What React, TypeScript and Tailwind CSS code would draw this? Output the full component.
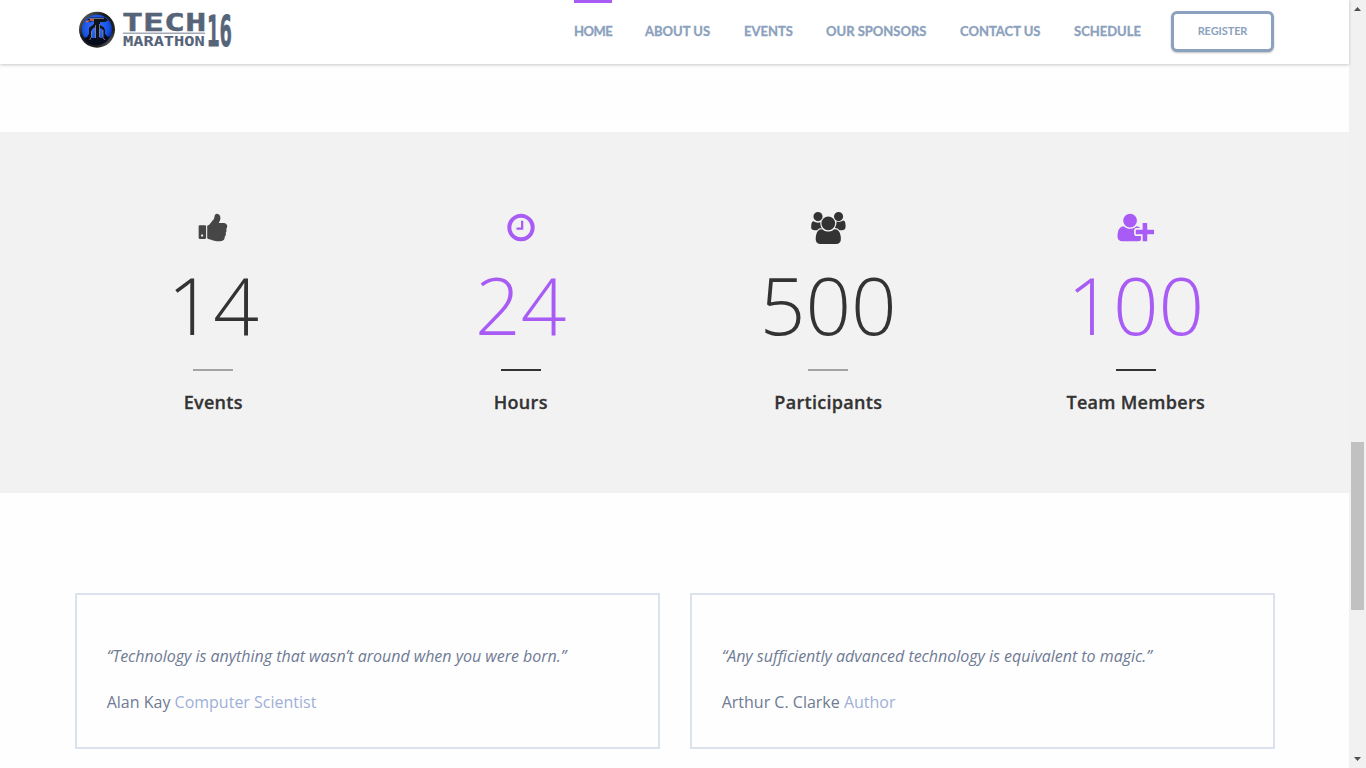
import React from "react";

const THUMBS_UP =
  "M320 1344q0-26-19-45t-45-19q-27 0-45.5 19t-18.5 45q0 27 18.5 45.5t45.5 18.5q26 0 45-18.5t19-45.5zm160-512v640q0 26-19 45t-45 19h-288q-26 0-45-19t-19-45v-640q0-26 19-45t45-19h288q26 0 45 19t19 45zm1184 0q0 86-55 149 15 44 15 76 3 76-43 137 17 56 0 117-15 57-54 94 9 112-49 181-64 76-197 78h-129q-66 0-144-15.5t-121.5-29-120.5-39.5q-123-43-158-44-26-1-45-19.5t-19-44.5v-641q0-25 18-43.5t43-20.5q24-2 76-59t101-121q68-87 101-120 18-18 31-48t17.5-48.5 13.5-60.5q7-39 12.5-61t19.5-52 34-50q19-19 45-19 46 0 82.5 10.5t60 26 40 40.5 24 45 12 50 5 45 .5 39q0 38-9.5 76t-19 60-27.5 56q-3 6-10 18t-11 22-8 24h277q78 0 135 57t57 135z";
const CLOCK =
  "M1024 544v448q0 14-9 23t-23 9h-320q-14 0-23-9t-9-23v-64q0-14 9-23t23-9h224v-352q0-14 9-23t23-9h64q14 0 23 9t9 23zm416 352q0-148-73-273t-198-198-273-73-273 73-198 198-73 273 73 273 198 198 273 73 273-73 198-198 73-273zm224 0q0 209-103 385.5t-279.5 279.5-385.5 103-385.5-103-279.5-279.5-103-385.5 103-385.5 279.5-279.5 385.5-103 385.5 103 279.5 279.5 103 385.5z";
const USERS =
  "M657 896q-162 5-265 128h-134q-82 0-138-40.5t-56-118.5q0-353 124-353 6 0 43.5 21t97.5 42.5 119 21.5q67 0 133-23-5 37-5 66 0 159 93 293zm1071 637q0 120-73 189.5t-194 69.5h-874q-121 0-194-69.5t-73-189.5q0-53 3.5-103.5t14-109 26.5-108.5 43-97.5 62-81 85.5-53.5 111.5-20q10 0 43 21.5t73 48 107 48 135 21.5 135-21.5 107-48 73-48 43-21.5q61 0 111.5 20t85.5 53.5 62 81 43 97.5 26.5 108.5 14 109 3.5 103.5zm-1024-1277q0 106-75 181t-181 75-181-75-75-181 75-181 181-75 181 75 75 181zm704 384q0 159-112.5 271.5t-271.5 112.5-271.5-112.5-112.5-271.5 112.5-271.5 271.5-112.5 271.5 112.5 112.5 271.5zm576 225q0 78-56 118.5t-138 40.5h-134q-103-123-265-128 93-134 93-293 0-29-5-66 66 23 133 23 59 0 119-21.5t97.5-42.5 43.5-21q124 0 124 353zm-128-609q0 106-75 181t-181 75-181-75-75-181 75-181 181-75 181 75 75 181z";
const USER_PLUS =
  "M704 896q-159 0-271.5-112.5t-112.5-271.5 112.5-271.5 271.5-112.5 271.5 112.5 112.5 271.5-112.5 271.5-271.5 112.5zm960 128h352q13 0 22.5 9.5t9.5 22.5v192q0 13-9.5 22.5t-22.5 9.5h-352v352q0 13-9.5 22.5t-22.5 9.5h-192q-13 0-22.5-9.5t-9.5-22.5v-352h-352q-13 0-22.5-9.5t-9.5-22.5v-192q0-13 9.5-22.5t22.5-9.5h352v-352q0-13 9.5-22.5t22.5-9.5h192q13 0 22.5 9.5t9.5 22.5v352zm-736 224q0 52 38 90t90 38h256v238q-68 50-171 50h-874q-121 0-194-69t-73-190q0-53 3.5-103.5t14-109 26.5-108.5 43-97.5 62-81 85.5-53.5 111.5-20q19 0 39 17 79 61 154.5 91.5t164.5 30.5 164.5-30.5 154.5-91.5q20-17 39-17 132 0 217 96h-223q-52 0-90 38t-38 90v192z";

const nav = [
  { label: "HOME", cls: "w-[38px] tracking-[-0.5px]", active: true },
  { label: "ABOUT US", cls: "w-[66px] tracking-[0px]" },
  { label: "EVENTS", cls: "w-[49px] tracking-[0px]" },
  { label: "OUR SPONSORS", cls: "w-[101px] tracking-[0px]" },
  { label: "CONTACT US", cls: "w-[81px] tracking-[0px]" },
  { label: "SCHEDULE", cls: "w-[68px] tracking-[0px]" },
];

const stats = [
  { value: "14", label: "Events", path: THUMBS_UP, box: "-28 28 1792 1792", icon: "w-8 text-[#464646]", num: "text-[#333]", bar: "bg-[#a3a3a3]" },
  { value: "24", label: "Hours", path: CLOCK, box: "0 28 1792 1792", icon: "w-8 text-[#a85cf5]", num: "text-[#a85cf5]", bar: "bg-[#333]" },
  { value: "500", label: "Participants", path: USERS, box: "0 0 2048 1792", icon: "w-[36.57px] text-[#333]", num: "text-[#333]", bar: "bg-[#a3a3a3]" },
  { value: "100", label: "Team Members", path: USER_PLUS, box: "-28 28 2048 1792", icon: "w-[36.57px] overflow-visible text-[#a85cf5]", num: "text-[#a85cf5]", bar: "bg-[#333]" },
];

const quotes = [
  { text: "“Technology is anything that wasn’t around when you were born.”", name: "Alan Kay", role: "Computer Scientist" },
  { text: "“Any sufficiently advanced technology is equivalent to magic.”", name: "Arthur C. Clarke", role: "Author" },
];

function Logo() {
  return (
    <svg width="166" height="56" viewBox="0 0 166 56" className="block">
      <defs>
        <linearGradient id="rim" x1="0" y1="0" x2="1" y2="1">
          <stop offset="0" stopColor="#777" />
          <stop offset="0.4" stopColor="#16181d" />
          <stop offset="0.75" stopColor="#222" />
          <stop offset="1" stopColor="#999" />
        </linearGradient>
        <radialGradient id="disc" cx="0.45" cy="0.4" r="0.65">
          <stop offset="0" stopColor="#3f74ff" />
          <stop offset="0.7" stopColor="#1450e0" />
          <stop offset="1" stopColor="#06187a" />
        </radialGradient>
      </defs>
      <circle cx="22" cy="29.7" r="18" fill="url(#rim)" />
      <circle cx="22" cy="29.7" r="15" fill="url(#disc)" />
      <path d="M9 38l3-1 2-3 3 4h10l3-4 3 3 2-1a15 15 0 0 1-26 3z" fill="#060b1d" />
      <path d="M12 20l3-2.500h15l3 3-3 1.500h-5v3l4 2.500 1 3v7l2 3-4-1.500v-9l-2-2-1.500 1v9l-2 3-2-3v-11l-2 1-2 2v6l-4 4 1.500-5v-7l5-4v-3l-5 1z" fill="#11131a" />
      <path d="M16.500 31v6l-2 3M20.500 25v13M24.500 24v13M28 30v8l2 2M14 18.500h15" fill="none" stroke="#9b9ea8" strokeWidth="0.7" />
      <path d="M11 22l3.500-1.500M15 20h4" stroke="#ef7355" strokeWidth="1.300" />
      <g fill="#566479" stroke="#566479" fontFamily="'DejaVu Sans Mono', monospace" fontWeight="700">
        <text transform="translate(47 31.300) scale(1.440 1)" fontSize="24.300" strokeWidth="0.4">TECH</text>
        <text transform="translate(48 46) scale(1.230 1)" fontSize="13.800" strokeWidth="0.1">MARATHON</text>
        <text transform="translate(132 45.700) scale(0.480 1)" fontSize="43" strokeWidth="1">16</text>
      </g>
      <rect x="48" y="32.600" width="82" height="1.200" fill="#8d97a5" />
    </svg>
  );
}

export default function App() {
  return (
    <div className="flex h-[768px] w-[1366px] overflow-hidden bg-[#fefefe] font-['Open_Sans',sans-serif]">
      <div className="flex w-[1349px] flex-col">
        <header className="z-10 flex h-16 shrink-0 bg-white pl-[75px] shadow-[0_1px_3px_rgba(0,0,0,0.22)]">
          <div className="w-[499px]">
            <Logo />
          </div>
          <nav className="flex gap-[33px] font-['Lato',sans-serif] text-[13px] font-bold text-[#8ba1bd] [-webkit-text-stroke:0.3px]">
            {nav.map((n) => (
              <a
                key={n.label}
                className={`h-16 border-t-[3px] leading-[57px] whitespace-nowrap ${n.cls} ${n.active ? "border-[#a85cf5]" : "border-transparent"}`}
              >
                {n.label}
              </a>
            ))}
          </nav>
          <button className="mt-[11px] ml-[29px] flex h-[41px] w-[103px] items-center justify-center rounded-[6px] border-[3px] border-[#8ba1bd] bg-white font-['Lato',sans-serif] text-[11px] font-bold tracking-[-0.1px] text-[#8ba1bd] shadow-[0_1px_2px_rgba(0,0,0,0.25)]">
            REGISTER
          </button>
        </header>

        <section className="mt-[68px] flex h-[361px] shrink-0 bg-[#f2f2f2] px-[59.5px] pt-20">
          {stats.map((s) => (
            <div key={s.label} className="flex w-[307.5px] flex-col items-center">
              <svg viewBox={s.box} className={`h-8 ${s.icon}`}>
                <path d={s.path} fill="currentColor" />
              </svg>
              <div className={`mt-5 h-20 text-[80px] leading-[80px] font-light ${s.num}`}>{s.value}</div>
              <div className={`mt-[25px] h-[2px] w-10 ${s.bar}`} />
              <div className="mt-[19px] text-lg leading-6 font-semibold tracking-[0.3px] text-[#333] [-webkit-text-stroke:0.3px]">
                {s.label}
              </div>
            </div>
          ))}
        </section>

        <section className="mt-[100px] flex shrink-0 gap-[30px] pl-[75px]">
          {quotes.map((q) => (
            <blockquote key={q.name} className="h-[156px] w-[585px] border-2 border-[#dce2ed] pt-12 pl-[29.7px] text-base text-[#6f7a94]">
              <p className="leading-[26px] tracking-[-0.02px] italic">{q.text}</p>
              <p className="mt-5 leading-[26px]">
                {q.name} <span className="text-[#9fb0d8]">{q.role}</span>
              </p>
            </blockquote>
          ))}
        </section>
      </div>

      <aside className="flex w-[17px] flex-col items-center bg-[#f1f1f1]">
        <svg width="17" height="17" viewBox="0 0 17 17">
          <path d="M5 11h7L8.5 7z" fill="#505050" />
        </svg>
        <div className="mt-[425px] h-[168px] w-[13px] bg-[#c1c1c1]" />
        <svg width="17" height="17" viewBox="0 0 17 17" className="mt-auto">
          <path d="M5 6h7L8.5 10z" fill="#505050" />
        </svg>
      </aside>
    </div>
  );
}
